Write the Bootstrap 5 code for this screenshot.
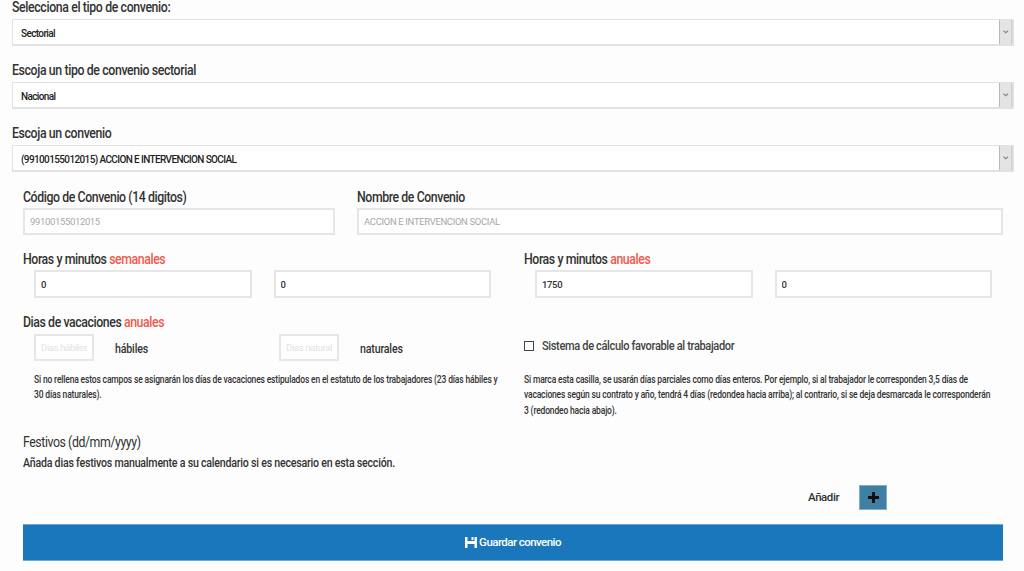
<!DOCTYPE html>
<html lang="es">
<head>
<meta charset="utf-8">
<title>Convenio</title>
<link rel="stylesheet" href="https://cdn.jsdelivr.net/npm/bootstrap@5.3.0/dist/css/bootstrap.min.css">
<style>
html,body{height:571px;overflow:hidden}
body{background:#fdfdfd;color:#2e2e2e;font-family:Roboto,"Liberation Sans",sans-serif;font-size:12px}
.sheet{width:1002px;margin-left:12px}
.narrow{transform:scaleX(.85);transform-origin:0 0}
.pick-label{display:block;height:19px;line-height:16px;margin:0;font-size:14.5px;font-weight:500;letter-spacing:-.45px;color:#333;white-space:nowrap}
.pick{display:block;width:100%;height:27px;margin-bottom:17px;padding:3px 30px 0 8px;border:2px solid #e2e2e2;border-width:1px 1px 2px;border-radius:0;background-color:#fff;font-family:inherit;font-size:10px;font-weight:500;letter-spacing:-.62px;color:#222;box-shadow:none;background-position:right 0 center;background-size:14px 27px;background-repeat:no-repeat;appearance:none;background-image:url("data:image/svg+xml,%3Csvg xmlns='http://www.w3.org/2000/svg' viewBox='0 0 14 27'%3E%3Crect x='.5' y='.5' width='12.5' height='25' fill='%23e4e4e4' stroke='%23b9b9b9'/%3E%3Cpath d='M4.5 12l2.3 2 2.3-2' fill='none' stroke='%23888' stroke-width='1.2'/%3E%3C/svg%3E")}
.tight-row{--bs-gutter-x:22px;--bs-gutter-y:0;margin-left:0;margin-right:0}
.tight-row>*{padding-left:11px;padding-right:11px}
.first-block{padding-top:1px}
.hours-block{margin-top:17px}
.days-block{margin-top:17px}
.sub-title{height:18px;line-height:16px;margin:0;font-size:14.5px;font-weight:500;letter-spacing:-.5px;color:#333;white-space:nowrap}
.sub-title-tall{height:19px;line-height:16px}
.accent{color:#ef5a4c}
.field{display:block;width:100%;height:27px;padding:0 5px;border:2px solid #e6e6e6;border-radius:0;background:#fff;font-family:inherit;font-size:9.5px;letter-spacing:-.35px;font-weight:500;color:#333;outline:0}
.field:disabled{background:#fff;color:#a8a8a8;font-weight:400}
.field-high{height:28px}
.pair{display:grid;grid-template-columns:1fr 1fr;gap:22px;padding:0 11px}
.days{display:grid;grid-template-columns:245px 1fr;padding-left:11px}
.day{display:flex;align-items:center;gap:21px}
.day-word{display:inline-block;padding-top:3px;font-weight:500;font-size:12.5px;letter-spacing:-.2px;color:#333}
.day input{width:60px;flex:none}
.day input::placeholder{color:#e2e2e2;font-weight:400}
.fine{width:552px;margin:11px 0 0;font-size:10px;line-height:15.4px;letter-spacing:-.19px;font-weight:500;color:#333}
.fine-left{margin-left:11px}
.fine-right{margin-top:13px}
.check-line{display:flex;align-items:center;gap:8px;height:27px;margin-top:17px}
.check-word{display:inline-block;font-size:13px;font-weight:500;letter-spacing:-.42px;color:#444;white-space:nowrap}
.check-box{width:10px;height:10px;margin:0;appearance:none;border:1px solid #444;background:#fff;flex:none}
.fest-title{margin:16px 0 0;font-size:14.5px;line-height:18px;font-weight:400;letter-spacing:-.5px;color:#333;white-space:nowrap}
.fest-text{margin:3px 0 0;font-size:12.5px;line-height:16px;font-weight:500;letter-spacing:-.26px;color:#333;white-space:nowrap}
.add-line{display:flex;justify-content:flex-end;align-items:center;gap:20px;padding-right:116px;margin-top:14px}
.add-label{font-size:11.5px;font-weight:500;letter-spacing:-.45px;color:#333}
.add-btn{width:28px;height:25px;padding:0;display:flex;align-items:center;justify-content:center;background:#3f7fa3;border:1px solid #7fb0cb;border-radius:0}
.save-btn{display:flex;width:100%;height:37px;margin-top:14px;align-items:center;justify-content:center;gap:2px;background:#1a77bb;border:0;border-top:1px solid #6aa9d6;border-bottom:1px solid #6aa9d6;border-radius:0;color:#fff;font-size:11.5px;font-weight:500;letter-spacing:-.55px}
.save-btn:hover{background:#1a77bb;color:#fff}
</style>
</head>
<body>
<main class="sheet">
<label class="pick-label narrow">Selecciona el tipo de convenio:</label>
<select class="pick form-select"><option>Sectorial</option></select>
<label class="pick-label narrow">Escoja un tipo de convenio sectorial</label>
<select class="pick form-select"><option>Nacional</option></select>
<label class="pick-label narrow">Escoja un convenio</label>
<select class="pick form-select"><option>(99100155012015) ACCION E INTERVENCION SOCIAL</option></select>

<div class="row tight-row first-block">
  <div class="col-4">
    <p class="sub-title narrow">Código de Convenio (14 digitos)</p>
    <input class="field" disabled value="99100155012015">
  </div>
  <div class="col-8">
    <p class="sub-title narrow">Nombre de Convenio</p>
    <input class="field" disabled value="ACCION E INTERVENCION SOCIAL">
  </div>
</div>

<div class="row tight-row hours-block">
  <div class="col-6">
    <p class="sub-title narrow">Horas y minutos <span class="accent">semanales</span></p>
    <div class="pair"><input class="field field-high" value="0"><input class="field field-high" value="0"></div>
  </div>
  <div class="col-6">
    <p class="sub-title narrow">Horas y minutos <span class="accent">anuales</span></p>
    <div class="pair"><input class="field field-high" value="1750"><input class="field field-high" value="0"></div>
  </div>
</div>

<div class="row tight-row days-block">
  <div class="col-6">
    <p class="sub-title sub-title-tall narrow">Dias de vacaciones <span class="accent">anuales</span></p>
    <div class="days">
      <div class="day"><input class="field" placeholder="Dias hábiles"><span class="day-word narrow">hábiles</span></div>
      <div class="day"><input class="field" placeholder="Dias naturales"><span class="day-word narrow">naturales</span></div>
    </div>
    <p class="fine fine-left narrow">Si no rellena estos campos se asignarán los días de vacaciones estipulados en el estatuto de los trabajadores (23 días hábiles y 30 días naturales).</p>
  </div>
  <div class="col-6">
    <div class="check-line"><input type="checkbox" class="check-box"><span class="check-word narrow">Sistema de cálculo favorable al trabajador</span></div>
    <p class="fine fine-right narrow">Si marca esta casilla, se usarán días parciales como días enteros. Por ejemplo, si al trabajador le corresponden 3,5 días de vacaciones según su contrato y año, tendrá 4 días (redondea hacia arriba); al contrario, si se deja desmarcada le corresponderán 3 (redondeo hacia abajo).</p>
  </div>
</div>

<div class="row tight-row">
  <div class="col-12">
    <p class="fest-title narrow">Festivos (dd/mm/yyyy)</p>
    <p class="fest-text narrow">Añada dias festivos manualmente a su calendario si es necesario en esta sección.</p>
    <div class="add-line">
      <span class="add-label">Añadir</span>
      <button type="button" class="btn add-btn" aria-label="Añadir"><svg width="11" height="11" viewBox="0 0 11 11"><path d="M4 0h3v4h4v3H7v4H4V7H0V4h4z" fill="#111"/></svg></button>
    </div>
    <button type="button" class="btn save-btn"><svg width="12" height="11" viewBox="0 0 12 11"><path d="M0 0h2.5v4h7V0H12v11H9.5V7h-7v4H0zM6.5 0h2v3h-2z" fill="#fff"/></svg>Guardar convenio</button>
  </div>
</div>
</main>
</body>
</html>
